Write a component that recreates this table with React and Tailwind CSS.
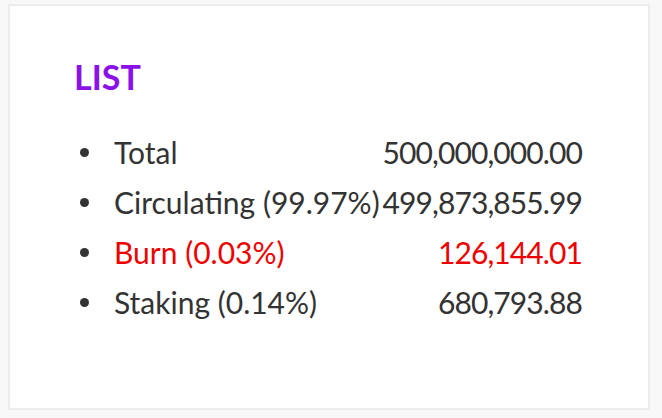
import React from "react";

const rows = [
  { label: "Total", value: "500,000,000.00" },
  { label: "Circulating (99.97%)", value: "499,873,855.99" },
  { label: "Burn (0.03%)", value: "126,144.01", red: true },
  { label: "Staking (0.14%)", value: "680,793.88" },
];

export default function App() {
  return (
    <div className="min-h-[418px] bg-[#f8f8f8] pt-1 pl-2 font-['Lato',sans-serif]">
      <div className="w-[642px] h-[406px] bg-white border-2 border-[#ececec] pl-[64px] pr-[66px] pt-[47px]">
        <h2 className="text-[34px] leading-[48px] font-bold text-[#8b12e6]">LIST</h2>
        <ul className="mt-[26px]">
          {rows.map((row) => (
            <li
              key={row.label}
              className={`flex items-center h-[50px] text-[30px] whitespace-nowrap ${
                row.red ? "text-[#ee0000]" : "text-[#333333]"
              }`}
            >
              <span className="w-[9px] h-[9px] rounded-full bg-[#333333] ml-[6px] mr-[25px] shrink-0" />
              <span>{row.label}</span>
              <span className="ml-auto tracking-[-0.9px]">{row.value}</span>
            </li>
          ))}
        </ul>
      </div>
    </div>
  );
}
